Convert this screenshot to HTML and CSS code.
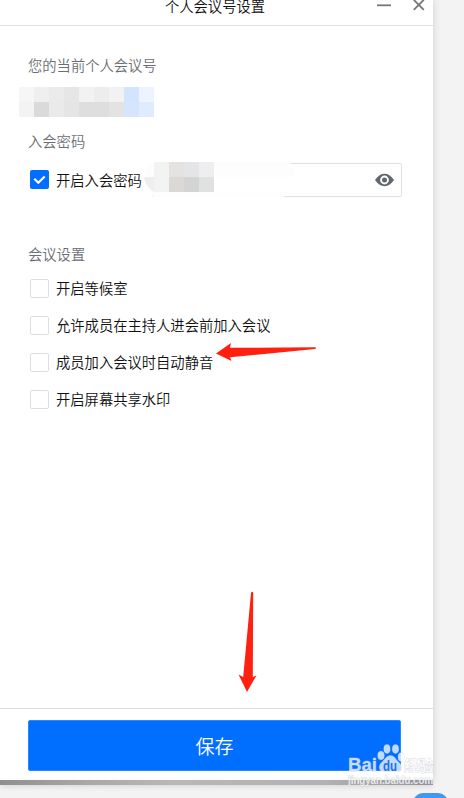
FILE: index.html
```html
<!DOCTYPE html>
<html lang="zh-CN">
<head>
<meta charset="UTF-8" />
<meta name="viewport" content="width=device-width, initial-scale=1" />
<title>个人会议号设置</title>
<link rel="stylesheet" href="styles.css">
</head>
<body>
<div class="window">
  <header class="titlebar">
    <h1>个人会议号设置</h1>
    <div class="controls">
      <svg width="14" height="14" viewBox="0 0 14 14"><path d="M0 7.3h14" /></svg>
      <svg width="12" height="14" viewBox="0 0 12 14"><path d="M.8 1.8l10 10M10.8 1.8l-10 10" /></svg>
    </div>
  </header>

  <main class="content">
    <h2>您的当前个人会议号</h2>
    <div class="mosaic">
      <i class="c1"></i><i class="c2"></i><i class="c3"></i><i class="c4"></i><i class="c5"></i><i class="c6"></i><i class="c7"></i><i class="c8"></i><i class="c9"></i>
      <i class="c10"></i><i class="c11"></i><i class="c12"></i><i class="c13"></i><i class="c14"></i><i class="c15"></i><i class="c16"></i><i class="c17"></i><i class="c18"></i>
    </div>

    <h2>入会密码</h2>
    <div class="password-row">
      <label class="option">
        <span class="box checked"><svg width="19" height="19" viewBox="0 0 19 19"><path d="M4.3 8.800l4 4 6.400-6.300" /></svg></span>
        开启入会密码
      </label>
      <div class="field">
        <svg class="eye" width="19" height="14" viewBox="0 0 19 14">
          <path fill-rule="evenodd" d="M0 7C3 2.600 6 .8 9.500.8S16 2.600 19 7c-3 4.400-6 6.200-9.500 6.200S3 11.400 0 7zM9.500 2.600a4.400 4.400 0 1 0 0 8.800a4.400 4.400 0 1 0 0-8.800z" />
          <circle cx="9.500" cy="7" r="2.500" />
        </svg>
      </div>
      <svg class="smudge" width="155" height="36" viewBox="0 0 155 36">
        <path fill="#fdfdfd" d="M10 0H146L151 12L143 33L139 35H10Q0 28 0 18Q0 6 10 0z" />
        <path fill="#fff" d="M70 15h80l-6 15H70z" />
        <path fill="#eee" d="M0 15h10v15Q1 24 0 15z" />
        <path fill="#f2f3f3" d="M10 0h15v15H10zM10 15h15v15H10z" />
        <path fill="#e5e3e2" d="M25 0h15v15H25z" />
        <path fill="#e3e5e7" d="M40 0h15v15H40z" />
        <path fill="#eeeeef" d="M55 0h15v15H55z" />
        <path fill="#dbd8d7" d="M25 15h15v15H25z" />
        <path fill="#d4d4d4" d="M40 15h15v15H40z" />
        <path fill="#e0e2e1" d="M55 15h15v15H55z" />
      </svg>
    </div>

    <h2 class="settings-title">会议设置</h2>
    <div class="options">
      <label class="option"><span class="box"></span>开启等候室</label>
      <label class="option"><span class="box"></span>允许成员在主持人进会前加入会议</label>
      <label class="option"><span class="box"></span>成员加入会议时自动静音</label>
      <label class="option"><span class="box"></span>开启屏幕共享水印</label>
    </div>
  </main>

  <footer class="footer">
    <button type="button" class="btn">保存</button>
  </footer>
</div>
<div class="edge"></div>

<!-- red pointers -->
<svg class="arrow arrow-left" width="101" height="20" viewBox="0 0 101 20">
  <path d="M0 10.500L15 0L14 4.800L99 4.300Q101 5 99 6L14 14.200L15.500 18z" />
</svg>
<svg class="arrow arrow-down" width="20" height="102" viewBox="0 0 20 102">
  <path d="M13 2Q14.200-.5 15.200 2L14.800 86L18.500 84.500L9 101L.5 83.500L5.200 86z" />
</svg>

<svg class="watermark" width="92" height="48" viewBox="0 0 92 48">
  <g class="mark">
    <text x="1" y="30" class="brand" textLength="29" lengthAdjust="spacingAndGlyphs">Bai</text>
    <ellipse cx="34" cy="14.500" rx="3.300" ry="4.300" />
    <ellipse cx="40" cy="8" rx="3.200" ry="4.400" />
    <ellipse cx="48.500" cy="8" rx="3.200" ry="4.400" />
    <ellipse cx="54" cy="16" rx="3" ry="4.300" />
    <path d="M43.500 14.500c4 0 5.500 4.500 8.500 7s4 9-1.500 9H37c-6 0-5.500-6.500-2.500-9s5-7 9-7z" />
    <text x="57" y="30" class="cn" textLength="30" lengthAdjust="spacingAndGlyphs">经验</text>
    <text x="1" y="42.500" class="url" textLength="85" lengthAdjust="spacingAndGlyphs">jingyan.baidu.com</text>
  </g>
  <text x="36" y="29.500" class="du" textLength="14" lengthAdjust="spacingAndGlyphs">du</text>
</svg>
<div class="bubble"></div>
</body>
</html>
```

FILE: styles.css
```css
* {
  box-sizing: border-box;
}
body {
  margin: 0;
  height: 798px;
  position: relative;
  overflow: hidden;
  background: #f3f3f3;
  color: #111;
  font-family: "Noto Sans CJK SC", sans-serif;
  font-size: 14.3px;
}
h1, h2 {
  margin: 0;
  font-size: 14.3px;
  font-weight: 350;
  line-height: 20px;
}
.window {
  display: flex;
  flex-direction: column;
  width: 433px;
  height: 780px;
  background: #fff;
  box-shadow: 1px 0 7px rgba(0, 0, 0, .12);
}
.titlebar {
  display: flex;
  position: relative;
  height: 26px;
  justify-content: center;
  border-bottom: 1px solid #e1e1e1;
}
.titlebar h1 {
  margin-right: 3px;
  line-height: 12px;
}
.controls {
  position: absolute;
  top: -2px;
  right: 8px;
  display: flex;
  gap: 22px;
}
.controls svg {
  fill: none;
  stroke: #74777b;
  stroke-width: 1.8;
}
.content {
  flex: 1;
  padding: 29px 31px 0 28px;
}
h2 {
  color: #6b6e73;
}
.mosaic {
  display: grid;
  grid-template-columns: repeat(9, 15px);
  grid-auto-rows: 15px;
  margin: 12px 0 14px -9px;
}
.c1 { background: #f6f6f6; }
.c2 { background: #efefef; }
.c3 { background: #ebebeb; }
.c4 { background: #e6e6e6; }
.c5 { background: #f2f2f2; }
.c6 { background: #ededed; }
.c7 { background: #f2f2f2; }
.c8 { background: #d3e4fe; }
.c9 { background: #edf4ff; }
.c10 { background: #f3f3f3; }
.c11 { background: #dadada; }
.c12 { background: #eaeaea; }
.c13 { background: #e5e5e5; }
.c14, .c15 { background: #dedede; }
.c16 { background: #e3e3e3; }
.c17 { background: #d5e5fe; }
.c18 { background: #dfecff; }
.password-row {
  display: flex;
  position: relative;
  height: 34px;
  margin-top: 12px;
  justify-content: space-between;
  align-items: center;
}
.option {
  display: flex;
  align-items: center;
  height: 20px;
  padding-left: 2px;
  line-height: 20px;
  white-space: nowrap;
  font-weight: 350;
}
.box {
  width: 19px;
  height: 19px;
  margin-right: 7px;
  border: 1px solid #dedede;
  border-radius: 2px;
}
.checked {
  border: 0;
  background: #006fff;
}
.checked svg {
  display: block;
  fill: none;
  stroke: #fff;
  stroke-width: 2.2;
}
.password-row .option {
  margin-top: -1px;
}
.field {
  display: flex;
  flex: 1;
  height: 34px;
  margin-left: 10px;
  padding-right: 7px;
  align-items: center;
  justify-content: flex-end;
  border: 1px solid #dfe0e2;
  border-radius: 2px;
}
.eye {
  fill: #62666d;
}
.smudge {
  position: absolute;
  left: 116px;
  top: -1px;
}
.settings-title {
  margin-top: 47px;
}
.options {
  display: grid;
  gap: 17px;
  margin-top: 14px;
}
.footer {
  height: 72px;
  padding: 11px 32px 0 28px;
  border-top: 1px solid #dedede;
}
.btn {
  display: block;
  width: 100%;
  height: 51px;
  border: 1px solid #2b86ff;
  border-radius: 2px;
  background: #006fff;
  color: #fff;
  font-family: inherit;
  font-size: 19px;
  font-weight: 350;
}
.edge {
  position: relative;
  width: 433px;
  height: 5px;
  background: linear-gradient(90deg, #8f8f8d, #aaa8a5 20%, #b8b8b7 40%, #b2b2b2 75%, #8e8d97);
  box-shadow: 0 2px 5px rgba(0, 0, 0, .1);
}
.arrow {
  position: absolute;
  fill: #ff2010;
}
.arrow-left {
  left: 216px;
  top: 343px;
}
.arrow-down {
  left: 238px;
  top: 591px;
}
.watermark {
  position: absolute;
  left: 347px;
  top: 741px;
}
.mark {
  fill: rgba(255, 255, 255, .75);
  stroke: rgba(175, 180, 190, .5);
  stroke-width: .8;
  paint-order: stroke;
}
.brand {
  font: bold 19px "Liberation Sans", sans-serif;
}
.du {
  font: bold 14px "Liberation Sans", sans-serif;
  fill: #1d70e8;
}
.cn {
  font: bold 15px "Noto Sans CJK SC", sans-serif;
}
.url {
  font: bold 10px "Liberation Sans", sans-serif;
}
.bubble {
  position: absolute;
  left: 413px;
  top: 793px;
  width: 35px;
  height: 20px;
  border-radius: 10px;
  background: #4297f5;
}
```
